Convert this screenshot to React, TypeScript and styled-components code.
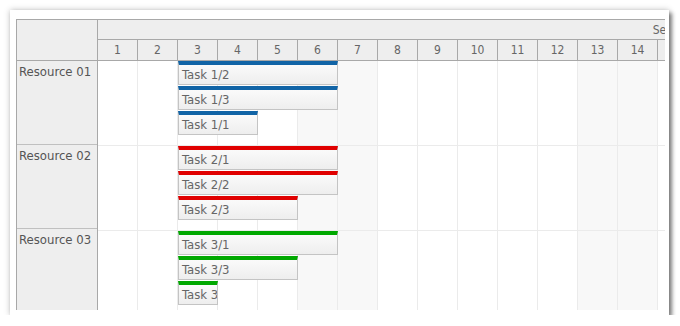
import React from "react";
import styled, { createGlobalStyle } from "styled-components";

const GlobalStyle = createGlobalStyle`
  html, body {
    margin: 0;
    padding: 0;
    background: #ffffff;
  }
  body {
    font-family: "DejaVu Sans Condensed", "DejaVu Sans", Tahoma, sans-serif;
    font-size: 12px;
    color: #666666;
  }
`;

const CELL = 40;
const DAYS = 15;
const WEEKENDS = [6, 7, 13, 14];

interface Task {
  name: string;
  start: number; // day index, 0 based
  days: number;
}

interface Resource {
  name: string;
  color: string;
  tasks: Task[];
}

const resources: Resource[] = [
  {
    name: "Resource 01",
    color: "#1164a6",
    tasks: [
      { name: "Task 1/2", start: 2, days: 4 },
      { name: "Task 1/3", start: 2, days: 4 },
      { name: "Task 1/1", start: 2, days: 2 },
    ],
  },
  {
    name: "Resource 02",
    color: "#e00000",
    tasks: [
      { name: "Task 2/1", start: 2, days: 4 },
      { name: "Task 2/2", start: 2, days: 4 },
      { name: "Task 2/3", start: 2, days: 3 },
    ],
  },
  {
    name: "Resource 03",
    color: "#00a800",
    tasks: [
      { name: "Task 3/1", start: 2, days: 4 },
      { name: "Task 3/3", start: 2, days: 3 },
      { name: "Task 3/2", start: 2, days: 1 },
    ],
  },
];

const Card = styled.div`
  margin: 10px 0 0 10px;
  width: 653px;
  height: 291px;
  padding: 9px 0 5px 6px;
  background: #ffffff;
  box-shadow: 0 0 6px rgba(0, 0, 0, 0.25), 3px 3px 4px rgba(0, 0, 0, 0.45);
`;

const Scheduler = styled.div`
  display: flex;
  width: 648px;
  height: 290px;
  border-left: 1px solid #a8a8a8;
  border-top: 1px solid #a8a8a8;
  overflow: hidden;
`;

const RowHeaders = styled.div`
  flex: none;
  width: 80px;
  display: flex;
  flex-direction: column;
  background: #eeeeee;
  border-right: 1px solid #a8a8a8;
`;

const Corner = styled.div`
  flex: none;
  height: 40px;
  border-bottom: 1px solid #a8a8a8;
`;

const RowHeader = styled.div`
  flex: none;
  height: 84px;
  padding: 3px 0 0 2px;
  box-sizing: border-box;
  border-bottom: 1px solid #c0c0c0;
  color: #555555;
  font-size: 13px;
  white-space: nowrap;
`;

const Timeline = styled.div`
  flex: none;
  display: flex;
  flex-direction: column;
  width: ${CELL * DAYS}px;
`;

const MonthRow = styled.div`
  flex: none;
  height: 19px;
  width: ${CELL * 30}px;
  background: #eeeeee;
  border-bottom: 1px solid #a8a8a8;
  display: flex;
  align-items: center;
  justify-content: center;
  white-space: nowrap;
`;

const DayRow = styled.div`
  flex: none;
  display: flex;
  height: 20px;
  background: #eeeeee;
  border-bottom: 1px solid #a8a8a8;
`;

const DayCell = styled.div`
  flex: none;
  width: ${CELL - 1}px;
  border-right: 1px solid #a8a8a8;
  display: flex;
  align-items: center;
  justify-content: center;
`;

const Row = styled.div`
  flex: none;
  position: relative;
  display: flex;
  height: 84px;
  border-bottom: 1px solid #ebebeb;
`;

const Cell = styled.div<{ $weekend: boolean }>`
  flex: none;
  width: ${CELL - 1}px;
  border-right: 1px solid #ebebeb;
  background: ${(p) => (p.$weekend ? "#f8f8f8" : "#ffffff")};
`;

const Event = styled.div<{ $color: string }>`
  position: absolute;
  height: 24px;
  box-sizing: border-box;
  border-top: 4px solid ${(p) => p.$color};
  border-left: 1px solid #c4c4c4;
  border-right: 1px solid #c4c4c4;
  border-bottom: 1px solid #c4c4c4;
  background: linear-gradient(to bottom, #fafafa 0%, #eeeeee 100%);
  color: #666666;
  padding: 2px 0 0 3px;
  white-space: nowrap;
  overflow: hidden;
  font-size: 13px;
`;

export default function App() {
  const days = Array.from({ length: DAYS }, (_, i) => i + 1);
  return (
    <>
      <GlobalStyle />
      <Card>
        <Scheduler>
          <RowHeaders>
            <Corner />
            {resources.map((r) => (
              <RowHeader key={r.name}>{r.name}</RowHeader>
            ))}
          </RowHeaders>
          <Timeline>
            <MonthRow>September 2013</MonthRow>
            <DayRow>
              {days.map((d) => (
                <DayCell key={d}>{d}</DayCell>
              ))}
            </DayRow>
            {resources.map((r) => (
              <Row key={r.name}>
                {days.map((d) => (
                  <Cell key={d} $weekend={WEEKENDS.includes(d)} />
                ))}
                {r.tasks.map((t, i) => (
                  <Event
                    key={t.name}
                    $color={r.color}
                    style={{ left: t.start * CELL, top: i * 25, width: t.days * CELL }}
                  >
                    {t.name}
                  </Event>
                ))}
              </Row>
            ))}
          </Timeline>
        </Scheduler>
      </Card>
    </>
  );
}
